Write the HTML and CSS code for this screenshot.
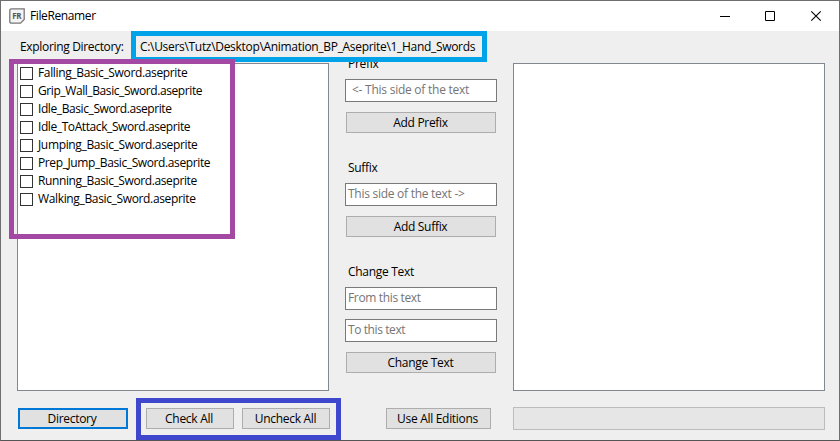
FILE: index.html
```
<!DOCTYPE html>
<html lang="en">
<head>
<meta charset="utf-8">
<title>FileRenamer</title>
<link rel="stylesheet" href="styles.css">
</head>
<body>
<div class="window">
  <header class="titlebar">
    <svg class="app-icon" width="16" height="16" viewBox="0 0 16 16">
      <path d="M2.5 .8H15.2V11.5L11.5 15.2H2.5Q.8 15.2 .8 13.5V2.5Q.8 .8 2.5 .8Z" fill="#f4f4f4" stroke="#777" stroke-width="1.3"/>
      <text x="7.8" y="10.8" text-anchor="middle" class="icon-text">FR</text>
    </svg>
    <h1 class="title">FileRenamer</h1>
    <svg class="controls" width="102" height="12" viewBox="0 0 102 12" fill="none" stroke="#000">
      <path d="M0 6.5H10M45.5 1.5H54.5V10.5H45.5Z"/>
      <path d="M91.3 1.3L100.7 10.7M100.7 1.3L91.3 10.7" stroke-width="1.1"/>
    </svg>
  </header>
  <div class="pathbar">
    <span class="path-label">Exploring Directory:</span>
    <span class="path">C:\Users\Tutz\Desktop\Animation_BP_Aseprite\1_Hand_Swords</span>
  </div>
  <main class="panels">
    <ul class="list files">
      <li><i class="box"></i><span class="snug">Falling_Basic_Sword.aseprite</span></li>
      <li><i class="box"></i><span class="tight">Grip_Wall_Basic_Sword.aseprite</span></li>
      <li><i class="box"></i><span class="tight">Idle_Basic_Sword.aseprite</span></li>
      <li><i class="box"></i><span class="tight">Idle_ToAttack_Sword.aseprite</span></li>
      <li><i class="box"></i><span class="snug">Jumping_Basic_Sword.aseprite</span></li>
      <li><i class="box"></i><span>Prep_Jump_Basic_Sword.aseprite</span></li>
      <li><i class="box"></i><span>Running_Basic_Sword.aseprite</span></li>
      <li><i class="box"></i><span class="snug">Walking_Basic_Sword.aseprite</span></li>
    </ul>
    <section class="edits">
      <div class="group">
        <span class="label">Prefix</span>
        <div class="field spaced">&lt;- This side of the text</div>
        <div class="button">Add Prefix</div>
      </div>
      <div class="group">
        <span class="label">Suffix</span>
        <div class="field">This side of the text -&gt;</div>
        <div class="button">Add Suffix</div>
      </div>
      <div class="group">
        <span class="label">Change Text</span>
        <div class="field from">From this text</div>
        <div class="field second">To this text</div>
        <div class="button">Change Text</div>
      </div>
    </section>
    <div class="list"></div>
  </main>
  <footer class="actions">
    <div class="button directory">Directory</div>
    <div class="button check">Check All</div>
    <div class="button uncheck">Uncheck All</div>
    <div class="button use-all">Use All Editions</div>
    <div class="progress"></div>
  </footer>
  <div class="mark mark-path"></div>
  <div class="mark mark-files"></div>
  <div class="mark mark-checks"></div>
</div>
</body>
</html>
```
FILE: styles.css
```
* { box-sizing: border-box; }
body { margin: 0; width: 840px; height: 441px; overflow: hidden; }
.window {
  position: relative; width: 840px; height: 441px;
  border: 1px solid #6e6e6e; border-bottom-color: #555;
  background: #efefef; color: #000;
  font: 12px/18px "Open Sans", "Noto Sans", sans-serif;
  letter-spacing: -0.3px; white-space: nowrap;
}
.titlebar { display: flex; align-items: center; height: 30px; padding: 0 17px 0 8px; background: #fff; }
.app-icon { margin-right: 5px; margin-top: -1px; }
.icon-text { font: bold 8px "Open Sans", sans-serif; fill: #555; letter-spacing: -0.2px; }
.title { margin: 0; font-size: 12px; font-weight: 400; letter-spacing: -0.38px; }
.controls { margin-left: auto; margin-top: -1px; }
.pathbar { display: flex; align-items: center; height: 32px; padding-left: 19px; }
.path-label { width: 120px; letter-spacing: -0.33px; }
.path { letter-spacing: -0.31px; }
.panels { display: flex; height: 328px; padding: 0 14px 0 16px; }
.list { width: 312px; height: 328px; margin: 0; padding: 0; border: 1px solid #828790; background: #fff; list-style: none; }
.files { letter-spacing: -0.39px; }
.files .snug { letter-spacing: -0.35px; }
.files .tight { letter-spacing: -0.41px; }
.files li { display: flex; align-items: center; height: 18px; padding-left: 2px; }
.box { width: 13px; height: 13px; margin-right: 5px; border: 1px solid #333; background: #fff; }
.edits { width: 184px; padding: 0 16px; }
.group { height: 104px; display: flex; flex-direction: column; }
.label { height: 16px; padding-left: 3px; line-height: 18px; margin-top: -8px; margin-bottom: 8px; }
.field { height: 23px; padding-left: 2px; border: 1px solid #7a7a7a; background: #fff; color: #757575; line-height: 20px; letter-spacing: -0.27px; }
.spaced { padding-left: 6px; letter-spacing: -0.25px; }
.from { letter-spacing: -0.35px; }
.second { margin-top: 9px; letter-spacing: -0.4px; }
.button { height: 21px; border: 1px solid #adadad; background: #e1e1e1; text-align: center; line-height: 20px; padding-right: 1px; }
.group .button { margin: 10px 1px 0; }
.actions { display: flex; align-items: center; height: 55px; padding-left: 17px; }
.directory { width: 110px; border: 2px solid #0078d7; line-height: 18px; padding-right: 2px; }
.check { width: 88px; margin-left: 18px; padding-right: 2px; }
.uncheck { width: 88px; margin-left: 8px; }
.use-all { width: 105px; margin-left: 56px; padding-right: 2px; }
.progress { width: 312px; height: 23px; margin-left: 22px; border: 1px solid #bcbcbc; background: #e6e6e6; }
.mark { position: absolute; border: 5px solid; }
.mark-path { left: 130px; top: 30px; width: 356px; height: 31px; border-color: #00a2e8; }
.mark-files { left: 8px; top: 58px; width: 226px; height: 180px; border-color: #a349a4; }
.mark-checks { left: 135px; top: 397px; width: 205px; height: 42px; border-color: #3f48cc; }
```
